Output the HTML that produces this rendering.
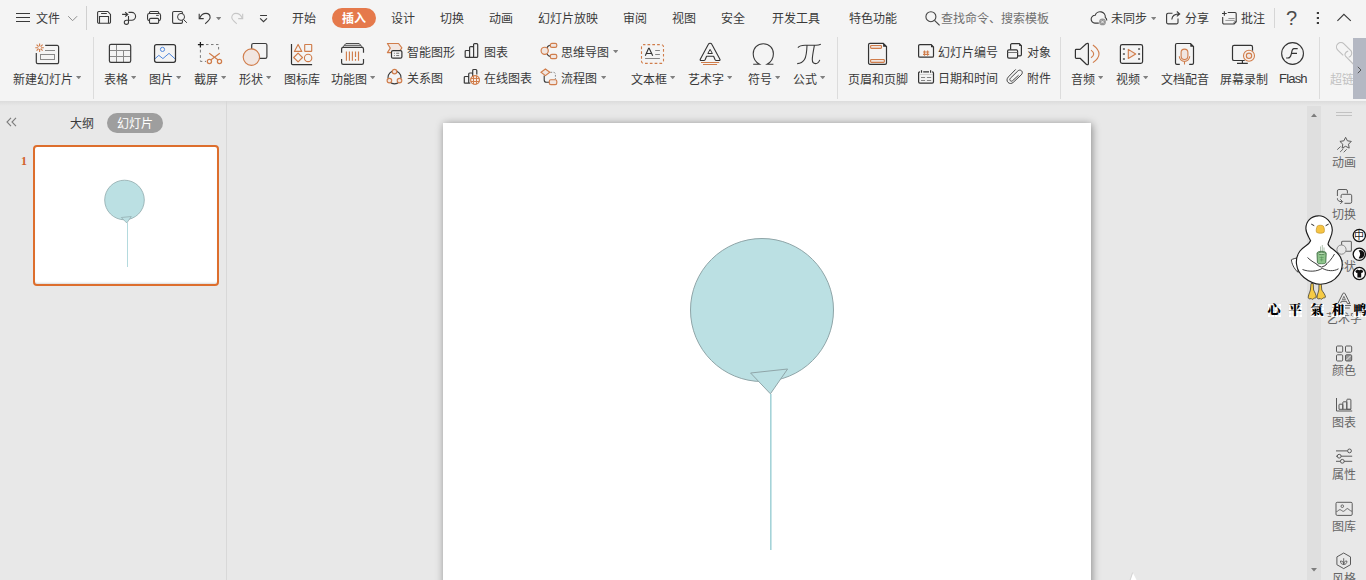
<!DOCTYPE html>
<html lang="zh-CN">
<head>
<meta charset="utf-8">
<title>WPS 演示</title>
<style>
*{margin:0;padding:0;box-sizing:border-box}
html,body{width:1366px;height:580px;overflow:hidden;background:#e8e8e8}
body{position:relative;font-family:"Liberation Sans","Noto Sans CJK SC",sans-serif;font-size:12px;color:#3a3a3a}
.t{position:absolute;white-space:nowrap;line-height:16px;height:16px;font-size:12px}
.i{position:absolute;overflow:visible}
.sep{position:absolute;width:1px;background:#dcdcdc}
.dd{position:absolute;width:5.400px;height:3.200px;background:#808080;clip-path:polygon(0 0,100% 0,50% 100%)}
#ribbon{position:absolute;left:0;top:0;width:1366px;height:101px;background:#f4f4f4}
#ribbonshadow{position:absolute;left:0;top:101px;width:1366px;height:5px;background:linear-gradient(#dcdcdc,#e8e8e8);z-index:3}
#left{position:absolute;left:226px;top:101px;width:1px;height:479px;background:#d8d8d8;z-index:4}
#slide{position:absolute;left:443px;top:123px;width:648px;height:486px;background:#fff;box-shadow:1px 1px 8px 0 rgba(0,0,0,.42)}
#vscroll{position:absolute;left:1307px;top:101px;width:14px;height:479px;background:#dfdfdf}
.g{color:#666}
.cap{position:absolute;top:303px;width:14px;height:14px;line-height:14px;font-size:13px;font-weight:900;color:#000;text-align:center;font-family:"Liberation Serif","Noto Serif CJK SC",serif;background-color:#fff;background-image:linear-gradient(#e4e4e4 1px,transparent 1px),linear-gradient(90deg,#e4e4e4 1px,transparent 1px);background-size:3.500px 3.500px;overflow:hidden}
</style>
</head>
<body>
<div id="ribbon"></div>
<div id="ribbonshadow"></div>
<!--TABS-->
<!-- top row: menu, quick access, tabs -->
<svg class="i" style="left:16px;top:12px" width="15" height="11" viewBox="0 0 15 11"><path d="M0 1.5h14M0 5.5h14M0 9.5h14" stroke="#3a3a3a" stroke-width="1.1" fill="none"/></svg>
<div class="t" style="left:36px;top:11px">文件</div>
<svg class="i" style="left:68px;top:16px" width="10" height="6" viewBox="0 0 10 6"><path d="M0.200 0.200L4.600 4.700L9.100 0.200" stroke="#8e8e8e" stroke-width="1" fill="none"/></svg>
<div class="sep" style="left:86px;top:6px;height:24px;background:#d0d0d0"></div>
<!-- save -->
<svg class="i" style="left:97px;top:11px" width="15" height="14" viewBox="0 0 15 14"><path d="M1.800 0.450h9l2.700 2.950v7.700a1.200 1.200 0 0 1-1.200 1.200h-10.500a1.200 1.200 0 0 1-1.200-1.200v-9.450a1.200 1.200 0 0 1 1.200-1.200z" stroke="#3a3a3a" stroke-width="1.100" fill="none"/><path d="M2.500 12.300v-6.850h9v6.850M4.100 2.450h5.700" stroke="#3a3a3a" stroke-width="1.100" fill="none"/></svg>
<!-- export/convert -->
<svg class="i" style="left:122px;top:11px" width="15" height="15" viewBox="0 0 15 15"><path d="M0.100 3.400h5.500M3.200 1.300l2.600 2.100l-2.600 2.050" stroke="#3a3a3a" stroke-width="1.100" fill="none"/><path d="M6.500 1.400h3.200a3.900 3.900 0 0 1 0 7.800h-5.300a2.100 2.100 0 1 0 2.100 2.100v-6.200" stroke="#3a3a3a" stroke-width="1.100" fill="none"/></svg>
<!-- print -->
<svg class="i" style="left:147px;top:11px" width="15" height="14" viewBox="0 0 15 14"><path d="M2.500 2.450v-1a1 1 0 0 1 1-1h7.150a1 1 0 0 1 1 1v1" stroke="#3a3a3a" stroke-width="1.100" fill="none"/><rect x="0.550" y="2.450" width="13" height="7.150" rx="1.800" stroke="#3a3a3a" stroke-width="1.100" fill="none"/><rect x="2.500" y="7.350" width="9.150" height="5" rx="1.200" fill="#f4f4f4" stroke="#3a3a3a" stroke-width="1.100"/><path d="M9.100 4.400h2.700" stroke="#3a3a3a" stroke-width="0.900"/></svg>
<!-- preview -->
<svg class="i" style="left:172px;top:11px" width="16" height="15" viewBox="0 0 16 15"><rect x="0.600" y="0.450" width="9.850" height="11.900" rx="1.300" stroke="#3a3a3a" stroke-width="1.100" fill="none"/><circle cx="9.050" cy="5.900" r="3.500" stroke="#3a3a3a" stroke-width="1" fill="#f4f4f4"/><path d="M11.600 8.600l3.300 3.200" stroke="#3a3a3a" stroke-width="1" fill="none"/></svg>
<!-- undo -->
<svg class="i" style="left:198px;top:12px" width="14" height="13" viewBox="0 0 14 13"><path d="M1.200 1.800v4.800h4.500" stroke="#3a3a3a" stroke-width="1.100" fill="none"/><path d="M1.600 6.200c1.400-3.200 3.900-4.800 6.400-4.800c2.400 0 4.100 1.800 4.100 4.100c0 2-1.600 3.300-4.900 6.300" stroke="#3a3a3a" stroke-width="1.100" fill="none"/></svg>
<div class="dd" style="left:216px;top:17px"></div>
<!-- redo (disabled) -->
<svg class="i" style="left:230px;top:12px" width="14" height="13" viewBox="0 0 14 13"><path d="M12.700 1.800v4.800h-4.500" stroke="#c6c6c6" stroke-width="1.100" fill="none"/><path d="M12.300 6.200c-1.400-3.200-3.900-4.800-6.400-4.800c-2.400 0-4.100 1.800-4.100 4.100c0 2 1.600 3.300 4.900 6.300" stroke="#c6c6c6" stroke-width="1.100" fill="none"/></svg>
<!-- customize -->
<svg class="i" style="left:259px;top:14px" width="9" height="9" viewBox="0 0 9 9"><path d="M1.100 1.500h6.900M1.100 4.300L4.500 7.700L8 4.300" stroke="#3a3a3a" stroke-width="1.100" fill="none"/></svg>

<div class="t" style="left:292px;top:11px">开始</div>
<div style="position:absolute;left:332px;top:8px;width:44px;height:20px;border-radius:10px;background:#e5794b"></div>
<div class="t" style="left:342px;top:11px;color:#fff;font-weight:bold">插入</div>
<div class="t" style="left:391px;top:11px">设计</div>
<div class="t" style="left:440px;top:11px">切换</div>
<div class="t" style="left:489px;top:11px">动画</div>
<div class="t" style="left:538px;top:11px">幻灯片放映</div>
<div class="t" style="left:623px;top:11px">审阅</div>
<div class="t" style="left:672px;top:11px">视图</div>
<div class="t" style="left:721px;top:11px">安全</div>
<div class="t" style="left:772px;top:11px">开发工具</div>
<div class="t" style="left:849px;top:11px">特色功能</div>
<svg class="i" style="left:925px;top:11px" width="15" height="15" viewBox="0 0 15 15"><circle cx="5.900" cy="5.700" r="5" stroke="#444" stroke-width="1.100" fill="none"/><path d="M9.500 9.400l5.100 5" stroke="#444" stroke-width="1.200"/></svg>
<div class="t" style="left:941px;top:11px;color:#707070">查找命令、搜索模板</div>

<!-- cloud -->
<svg class="i" style="left:1090px;top:10px" width="18" height="16" viewBox="0 -0.600 18 16"><path d="M8.800 12.500H4.900A3.900 3.900 0 0 1 5.200 4.700A5.200 5.200 0 0 1 15.300 6.900C16.400 7.600 16.800 8.600 16.800 9.800" stroke="#3a3a3a" stroke-width="1.100" fill="none"/><circle cx="12.500" cy="11.300" r="3.400" fill="#969696"/><path d="M11.100 9.900l2.800 2.800M13.900 9.900l-2.800 2.800" stroke="#f4f4f4" stroke-width="0.900"/></svg>
<div class="t" style="left:1111px;top:11px">未同步</div>
<div class="dd" style="left:1151px;top:17px"></div>
<!-- share -->
<svg class="i" style="left:1166px;top:11px" width="15" height="14" viewBox="0 0 15 14"><path d="M6.500 2.300h-4.400a1.500 1.500 0 0 0-1.500 1.500v7.600a1.500 1.500 0 0 0 1.500 1.500h8.400a1.500 1.500 0 0 0 1.500-1.500v-3.800" stroke="#3a3a3a" stroke-width="1.100" fill="none"/><path d="M5.800 8.500c0.300-3.400 2.600-5.600 7.800-5.600M10.800 0.500l2.900 2.400l-2.900 2.400" stroke="#3a3a3a" stroke-width="1.100" fill="none"/></svg>
<div class="t" style="left:1185px;top:11px">分享</div>
<!-- comment -->
<svg class="i" style="left:1221px;top:11px" width="16" height="14" viewBox="0 0 16 14"><path d="M6.800 1.500h7.200a1.200 1.200 0 0 1 1.200 1.200v8.200l-2 2.100h-10.300a1.200 1.200 0 0 1-1.200-1.200v-5.700" stroke="#3a3a3a" stroke-width="1.100" fill="none"/><path d="M15.200 10.700h-1.500a0.700 0.700 0 0 0-0.700 0.700v1.600" stroke="#3a3a3a" stroke-width="0.700" fill="none"/><path d="M1 2.500h4.700M3.350 0.200v4.600" stroke="#3a3a3a" stroke-width="1.100"/><path d="M7.400 7.500h6.300M4.400 9.400h9.300" stroke="#8a8a8a" stroke-width="0.900"/></svg>
<div class="t" style="left:1241px;top:11px">批注</div>
<div class="sep" style="left:1274px;top:8px;height:20px;background:#d6d6d6"></div>
<div class="t" style="left:1286px;top:7px;font-size:20px;line-height:22px;height:22px;color:#4c4c4c">?</div>
<svg class="i" style="left:1316px;top:11px" width="4" height="14" viewBox="0 0 4 14"><path d="M0.800 0.900h2.200v2.200h-2.200zM0.800 5.900h2.200v2.200h-2.200zM0.800 10.900h2.200v2.200h-2.200z" fill="#3a3a3a"/></svg>
<svg class="i" style="left:1337px;top:13px" width="15" height="9" viewBox="0 0 15 9"><path d="M0.400 7.900L6.900 1.300L13.800 7.900" stroke="#3a3a3a" stroke-width="1.100" fill="none"/></svg>
<!--/TABS-->
<!--RIBBON-->
<!-- ===== ribbon group 1 ===== -->
<!-- new slide -->
<svg class="i" style="left:34px;top:42px" width="26" height="24" viewBox="0 0 26 24"><path d="M2.300 11v9.300a1.400 1.400 0 0 0 1.400 1.400h19.500a1.400 1.400 0 0 0 1.400-1.400v-15.500a1.400 1.400 0 0 0-1.400-1.400h-12" stroke="#3a3a3a" stroke-width="1.200" fill="none"/><path d="M11 8.500h10" stroke="#8a8a8a" stroke-width="1"/><rect x="6.500" y="12.500" width="14" height="5" stroke="#8a8a8a" stroke-width="1" fill="none"/><path d="M7 5.700h2.900M4.200 5.700h-2.900M5.600 7.100v2.900M5.600 4.300v-2.900M6.600 6.700l2 2M4.600 6.700l-2 2M4.600 4.700l-2-2M6.600 4.700l2-2" stroke="#d07d4b" stroke-width="1.150"/></svg>
<div class="t" style="left:13px;top:72px">新建幻灯片</div>
<div class="dd" style="left:76px;top:76px"></div>
<div class="sep" style="left:93px;top:37px;height:62px"></div>
<!-- table -->
<svg class="i" style="left:108px;top:43px" width="24" height="21" viewBox="0 0 24 21"><path d="M1.400 7.500h21.300M1.400 13.500h21.300M8.500 1.300v18M15.500 7.500v11.800" stroke="#8a8a8a" stroke-width="1"/><rect x="1.400" y="1.300" width="21.300" height="18" rx="1.600" stroke="#3a3a3a" stroke-width="1.200" fill="none"/></svg>
<div class="t" style="left:104px;top:72px">表格</div>
<div class="dd" style="left:131px;top:76px"></div>
<!-- picture -->
<svg class="i" style="left:153px;top:43px" width="24" height="21" viewBox="0 0 24 21"><circle cx="9.500" cy="6.400" r="2.100" stroke="#4f87dd" stroke-width="1" fill="none"/><path d="M2 15.750L5.800 12.350L9.900 15.600L16 10.350L21.950 15.750" stroke="#4f87dd" stroke-width="1" fill="none" stroke-linejoin="round"/><rect x="1.550" y="1.550" width="20.950" height="17.700" rx="2" stroke="#333" stroke-width="1.250" fill="none"/></svg>
<div class="t" style="left:149px;top:72px">图片</div>
<div class="dd" style="left:176px;top:76px"></div>
<!-- screenshot -->
<svg class="i" style="left:197px;top:41px" width="27" height="25" viewBox="0 0 27 25"><path d="M0.900 3.550h5.750M3.400 1v5.600" stroke="#1a1a1a" stroke-width="1.250"/><path d="M9 3.550h12.600v6.900" stroke="#777" stroke-width="1" stroke-dasharray="2.500 2.500" fill="none"/><path d="M3.400 8.700v11.700h5.600" stroke="#777" stroke-width="1" stroke-dasharray="2.800 2.600" fill="none"/><circle cx="12.400" cy="20.400" r="2.100" stroke="#d07d4b" stroke-width="1.250" fill="none"/><circle cx="22.500" cy="20.400" r="2.100" stroke="#d07d4b" stroke-width="1.250" fill="none"/><path d="M12.200 12.200L21.200 18.900M22.800 12.200L13.700 18.900" stroke="#d07d4b" stroke-width="1.200" fill="none"/></svg>
<div class="t" style="left:194px;top:72px">截屏</div>
<div class="dd" style="left:221px;top:76px"></div>
<!-- shapes -->
<svg class="i" style="left:242px;top:42px" width="26" height="25" viewBox="0 0 26 25"><rect x="9.700" y="1.500" width="15.200" height="14.900" rx="1.600" stroke="#3a3a3a" stroke-width="1.200" fill="none"/><circle cx="9.400" cy="15.100" r="8.200" stroke="#d07d4b" stroke-width="1.150" fill="#f1e6e1"/></svg>
<div class="t" style="left:239px;top:72px">形状</div>
<div class="dd" style="left:266px;top:76px"></div>
<!-- icon library -->
<svg class="i" style="left:290px;top:43px" width="24" height="23" viewBox="0 0 24 23"><path d="M1.500 1v19.400a1.200 1.200 0 0 0 1.200 1.200h19.400" stroke="#333" stroke-width="1.200" fill="none"/><path d="M8.100 1.400l3.700 7h-7.400z" stroke="#d07d4b" stroke-width="1.150" fill="none" stroke-linejoin="round"/><rect x="14.700" y="1.500" width="7" height="6.900" rx="0.500" stroke="#d07d4b" stroke-width="1.150" fill="none"/><path d="M8.100 10.100l4.400 4.400l-4.400 4.400l-4.400-4.400z" stroke="#d07d4b" stroke-width="1.150" fill="none" stroke-linejoin="round"/><circle cx="18.100" cy="14.900" r="3.700" stroke="#d07d4b" stroke-width="1.150" fill="none"/></svg>
<div class="t" style="left:284px;top:72px">图标库</div>
<!-- function chart -->
<svg class="i" style="left:340px;top:42px" width="26" height="24" viewBox="0 0 26 24"><path d="M5.900 1.500h13.300M4.300 3.300h16.500M5.900 1.500l-3.300 3.800M19.200 1.500l3.300 3.800" stroke="#3a3a3a" stroke-width="0.900" fill="none"/><path d="M1.600 10.800v-3.900a1.600 1.600 0 0 1 1.600-1.600h18.700a1.600 1.600 0 0 1 1.600 1.600v3.900M1.600 17.100v3.700a1.600 1.600 0 0 0 1.600 1.600h18.700a1.600 1.600 0 0 0 1.600-1.600v-3.700" stroke="#3a3a3a" stroke-width="1.200" fill="none"/><path d="M6.400 9.400v9.400M9.400 9.400v9.400M12.400 9.400v9.400M15.500 9.400v5.700M15.500 17.100v1.700M18.500 9.400v9.400" stroke="#d07d4b" stroke-width="1.150"/></svg>
<div class="t" style="left:331px;top:72px">功能图</div>
<div class="dd" style="left:370px;top:76px"></div>
<!-- smart art -->
<svg class="i" style="left:386px;top:42px" width="17" height="18" viewBox="0 0 17 18"><path d="M1.400 1.500H12.550L15.900 5.900L12.500 10.600H1.400L4.300 6.100Z" stroke="#d07d4b" stroke-width="1.150" fill="#f1e6e1" stroke-linejoin="round"/><rect x="5.500" y="8.600" width="10.400" height="7.600" rx="1.500" stroke="#333" stroke-width="1.200" fill="#f4f4f4"/><path d="M7.900 11.250h0.900M10.200 11.250h3M7.900 13.550h0.900M10.200 13.550h3" stroke="#666" stroke-width="0.900"/></svg>
<div class="t" style="left:407px;top:45px">智能图形</div>
<!-- relation -->
<svg class="i" style="left:386px;top:68px" width="17" height="17" viewBox="0 0 17 17"><circle cx="8.500" cy="9.400" r="6.500" stroke="#3a3a3a" stroke-width="1.100" fill="none"/><circle cx="8.500" cy="3.600" r="2.300" stroke="#d07d4b" stroke-width="1.150" fill="#f1e6e1"/><circle cx="3.400" cy="12.600" r="2.300" stroke="#d07d4b" stroke-width="1.150" fill="#f1e6e1"/><circle cx="13.500" cy="12.600" r="2.300" stroke="#d07d4b" stroke-width="1.150" fill="#f1e6e1"/></svg>
<div class="t" style="left:407px;top:71px">关系图</div>
<!-- chart -->
<svg class="i" style="left:464px;top:42px" width="15" height="17" viewBox="0 0 15 17"><path d="M1.200 15.300v-5.800a1 1 0 0 1 1-1h2.400a1 1 0 0 1 1 1v5.800M5.600 15.300v-9.700a1 1 0 0 1 1-1h2a1 1 0 0 1 1 1v9.700M9.600 15.300v-12.700a1 1 0 0 1 1-1h2.100a1 1 0 0 1 1 1v12a0.700 0.700 0 0 1-0.700 0.700h-11.100a0.700 0.700 0 0 1-0.700-0.700" stroke="#3a3a3a" stroke-width="1.200" fill="none"/></svg>
<div class="t" style="left:484px;top:45px">图表</div>
<!-- online chart -->
<svg class="i" style="left:463px;top:68px" width="18" height="18" viewBox="0 0 18 18"><path d="M1.300 15.200v-5.700a1 1 0 0 1 1-1h2.400a1 1 0 0 1 1 1v5.700M5.700 15.200v-9.200a1 1 0 0 1 1-1h2a1 1 0 0 1 1 1v9.200M9.700 7v-4.500a1 1 0 0 1 1-1h2.100a1 1 0 0 1 1 1v4M1.300 15.200h6" stroke="#3a3a3a" stroke-width="1.200" fill="none"/><circle cx="12.050" cy="12" r="4.400" fill="#f8efe9" stroke="#d07d4b" stroke-width="1.200"/><path d="M10.500 7.800v8.400M13.500 7.800v8.400M7.800 10.450h8.500M7.800 13.500h8.500" stroke="#d07d4b" stroke-width="1"/></svg>
<div class="t" style="left:484px;top:71px">在线图表</div>
<!-- mind map -->
<svg class="i" style="left:540px;top:42px" width="18" height="18" viewBox="0 0 18 18"><path d="M6.800 6.200c1-2.500 1.800-2.900 3.600-2.900M6.800 11.400c1 2.500 1.800 3.100 3.600 3.100" stroke="#3a3a3a" stroke-width="1.100" fill="none"/><circle cx="4.700" cy="8.800" r="3.600" stroke="#d07d4b" stroke-width="1.150" fill="#f1e6e1"/><rect x="10.300" y="1.400" width="6.500" height="4" rx="1.600" stroke="#d07d4b" stroke-width="1.150" fill="#f1e6e1"/><rect x="10.300" y="12.400" width="6.500" height="4.200" rx="1.600" stroke="#d07d4b" stroke-width="1.150" fill="#f1e6e1"/></svg>
<div class="t" style="left:561px;top:45px">思维导图</div>
<div class="dd" style="left:613px;top:50px"></div>
<!-- flow chart -->
<svg class="i" style="left:540px;top:68px" width="18" height="18" viewBox="0 0 18 18"><path d="M4.200 7.400v4.600a2.300 2.300 0 0 0 2.300 2.300h3" stroke="#3a3a3a" stroke-width="1.100" fill="none"/><path d="M10.400 4.300h3a2 2 0 0 1 2 2v5" stroke="#8a8a8a" stroke-width="1" stroke-dasharray="1.800 1.400" fill="none"/><path d="M5.400 1l4.400 3.300l-4.400 3.300l-4.400-3.300z" stroke="#d07d4b" stroke-width="1.150" fill="#f1e6e1"/><rect x="9.300" y="11.700" width="7.500" height="4.900" rx="1.600" stroke="#d07d4b" stroke-width="1.150" fill="#f1e6e1"/></svg>
<div class="t" style="left:561px;top:71px">流程图</div>
<div class="dd" style="left:601px;top:76px"></div>
<!--R2-->
<!-- text box -->
<svg class="i" style="left:640px;top:43px" width="26" height="22" viewBox="0 0 26 22"><rect x="1.500" y="1.600" width="22" height="18.800" rx="2.200" stroke="#d07d4b" stroke-width="1.100" stroke-dasharray="2.700 2.100" stroke-dashoffset="1" fill="none"/><path d="M5.300 12.800l3.300-7.500h0.600l3.500 7.500M6.400 10.500h5.200" stroke="#333" stroke-width="1.100" fill="none"/><path d="M15.200 7.500h4.700M15.200 11.500h4.700M5.100 15.500h14.800" stroke="#858585" stroke-width="1"/></svg>
<div class="t" style="left:631px;top:72px">文本框</div>
<div class="dd" style="left:670px;top:76px"></div>
<!-- word art -->
<svg class="i" style="left:699px;top:42px" width="23" height="24" viewBox="0 0 23 24"><path d="M9.400 2.300C10.100 0.800 12.100 0.800 12.800 2.300L20.900 17.200Q21.500 18.500 20 18.500H17.300Q16.500 18.500 16.100 17.700L14.600 14.200H7.600L6.100 17.700Q5.700 18.500 4.900 18.500H2.200Q0.700 18.500 1.300 17.200Z" stroke="#333" stroke-width="1.100" fill="none" stroke-linejoin="round"/><path d="M11.100 7.400L13.400 11.500H8.800Z" stroke="#333" stroke-width="1" fill="none" stroke-linejoin="round"/><path d="M2 20.500h18.200M4 22.500h14.100" stroke="#d07d4b" stroke-width="1.150"/></svg>
<div class="t" style="left:688px;top:72px">艺术字</div>
<div class="dd" style="left:727px;top:76px"></div>
<!-- omega -->
<svg class="i" style="left:752px;top:42px" width="23" height="24" viewBox="0 0 23 24"><path d="M1.200 22.300h6.300c-3.700-2.200-6.300-5.800-6.300-10.600c0-5.800 4.200-10 10.100-10c5.900 0 10.100 4.200 10.100 10c0 4.800-2.600 8.400-6.300 10.600h6.300" stroke="#3a3a3a" stroke-width="1.100" fill="none"/></svg>
<div class="t" style="left:748px;top:72px">符号</div>
<div class="dd" style="left:775px;top:76px"></div>
<!-- pi -->
<svg class="i" style="left:796px;top:43px" width="26" height="22" viewBox="0 0 26 22"><path d="M1.900 4.700C3.500 2.600 5.500 2.300 9 2.300H20C22 2.300 23.600 1.800 24.800 1.200M11 2.400C10.800 8 10.600 13 8.500 16.500C6.800 19.300 4.200 20.500 1.200 20.600M18.400 2.300C17.400 8 16.300 13 16.300 16.500C16.300 19.300 17.800 20.600 19.600 20.600C21.600 20.600 23 19 23.800 16.900" stroke="#3a3a3a" stroke-width="1.100" fill="none"/></svg>
<div class="t" style="left:793px;top:72px">公式</div>
<div class="dd" style="left:820px;top:76px"></div>
<div class="sep" style="left:837px;top:37px;height:62px"></div>
<!-- header footer -->
<svg class="i" style="left:867px;top:42px" width="21" height="24" viewBox="0 0 21 24"><path d="M16.300 1.450h-13.350a1.400 1.400 0 0 0-1.400 1.400v18.050a1.400 1.400 0 0 0 1.400 1.400h15.150a1.400 1.400 0 0 0 1.400-1.400v-16.400z" stroke="#333" stroke-width="1.200" fill="none"/><path d="M16.100 1.250l3.600 3.450h-3.600z" fill="#333"/><rect x="3.600" y="3.500" width="10.900" height="2.900" rx="0.800" stroke="#d07d4b" stroke-width="1.150" fill="#f1e6e1"/><rect x="3.600" y="17.500" width="13.750" height="2.850" rx="0.800" stroke="#d07d4b" stroke-width="1.150" fill="#f1e6e1"/></svg>
<div class="t" style="left:848px;top:72px">页眉和页脚</div>
<!-- slide number -->
<svg class="i" style="left:917px;top:43px" width="18" height="16" viewBox="0 0 18 16"><path d="M14.200 1.600h-11.300a1.300 1.300 0 0 0-1.300 1.300v10a1.300 1.300 0 0 0 1.300 1.300h12.300a1.300 1.300 0 0 0 1.300-1.300v-8.900z" stroke="#333" stroke-width="1.200" fill="none"/><path d="M14 1.400l2.700 2.800h-2.700z" fill="#333"/><path d="M7.500 7.400v5.300M10.600 7.400v5.300M6 9h6.200M6 11.400h6.200" stroke="#d07d4b" stroke-width="1.100"/></svg>
<div class="t" style="left:938px;top:45px">幻灯片编号</div>
<!-- date time -->
<svg class="i" style="left:917px;top:68px" width="18" height="17" viewBox="0 0 18 17"><path d="M3 3.900h-0.100a1.300 1.300 0 0 0-1.300 1.300v8.600a1.300 1.300 0 0 0 1.300 1.300h12.300a1.300 1.300 0 0 0 1.300-1.300v-8.600a1.300 1.300 0 0 0-1.300-1.300h-0.100M6.200 3.800h5.800" stroke="#333" stroke-width="1.200" fill="none"/><path d="M4.500 2.200v2.600M13.600 2.200v2.600" stroke="#333" stroke-width="1.200"/><path d="M2 6.500h14" stroke="#c8c8c8" stroke-width="0.800"/><path d="M4 9.500h4.100M9.900 9.500h4.300M4 12.500h4.100M9.900 12.500h4.300" stroke="#858585" stroke-width="1"/></svg>
<div class="t" style="left:938px;top:71px">日期和时间</div>
<!-- object -->
<svg class="i" style="left:1006px;top:42px" width="17" height="18" viewBox="0 0 17 18"><path d="M4.600 7.600v-4.600a1.300 1.300 0 0 1 1.300-1.300h7.400l2.100 2.100v8.800a1.300 1.300 0 0 1-1.300 1.300h-2.300" stroke="#333" stroke-width="1.200" fill="none"/><path d="M13.200 1.500l2.400 2.400h-2.400z" fill="#333"/><rect x="1.600" y="7.900" width="10" height="8.200" rx="1.300" stroke="#333" stroke-width="1.200" fill="none"/><path d="M1.600 10.500h10" stroke="#666" stroke-width="0.900"/></svg>
<div class="t" style="left:1027px;top:45px">对象</div>
<!-- attachment -->
<svg class="i" style="left:1006px;top:68px" width="17" height="17" viewBox="0 0 17 17"><path d="M9.700 1.400L2.400 8.900C0.600 10.800 0.600 13 2 14.400C3.400 15.800 5.600 15.900 7.200 14.400L15.200 6.900C16.600 5.500 16.600 3.800 15.500 2.800C14.400 1.800 12.900 1.900 11.800 3L4.400 10.200C3.600 11 3.600 12 4.300 12.700C5 13.400 6 13.300 6.700 12.600L12.600 7.200" stroke="#444" stroke-width="1" fill="none"/></svg>
<div class="t" style="left:1027px;top:71px">附件</div>
<div class="sep" style="left:1060px;top:37px;height:62px"></div>
<!-- audio -->
<svg class="i" style="left:1074px;top:42px" width="27" height="24" viewBox="0 0 27 24"><path d="M2.200 7.400H6.100L12.300 1.800Q14.400 0.600 14.400 2.600V21.500Q14.400 23.500 12.300 22.300L6.100 16.300H2.200Q1.400 16.300 1.400 15.500V8.200Q1.400 7.400 2.200 7.400Z" stroke="#333" stroke-width="1.200" fill="none" stroke-linejoin="round"/><path d="M17 8.100Q22.400 12 17 15.800M18.900 3Q31.100 12 18.900 20.600" stroke="#d07d4b" stroke-width="1.100" fill="none"/></svg>
<div class="t" style="left:1071px;top:72px">音频</div>
<div class="dd" style="left:1098px;top:76px"></div>
<!-- video -->
<svg class="i" style="left:1119px;top:43px" width="25" height="22" viewBox="0 0 25 22"><rect x="1.400" y="1.600" width="22.200" height="18.800" rx="1.800" stroke="#333" stroke-width="1.200" fill="none"/><path d="M3.900 5h2v2h-2zM3.900 10h2v2h-2zM3.900 15h2v2h-2zM19.100 5h2v2h-2zM19.100 10h2v2h-2zM19.100 15h2v2h-2z" fill="#7a7a7a"/><path d="M9.300 6.400v9.100l7.400-4.500z" stroke="#d07d4b" stroke-width="1.100" fill="#f1e6e1" stroke-linejoin="round"/></svg>
<div class="t" style="left:1116px;top:72px">视频</div>
<div class="dd" style="left:1143px;top:76px"></div>
<!-- doc voice -->
<svg class="i" style="left:1174px;top:42px" width="21" height="24" viewBox="0 0 21 24"><path d="M5.800 22.400h-2.900a1.400 1.400 0 0 1-1.400-1.400v-18.100a1.400 1.400 0 0 1 1.400-1.400h13.700l2.900 2.900v16.600a1.400 1.400 0 0 1-1.400 1.400h-2.900" stroke="#333" stroke-width="1.200" fill="none"/><path d="M16.300 1.300l3.400 3.400h-3.400z" fill="#333"/><rect x="7.100" y="7.100" width="6.800" height="10.400" rx="3.400" stroke="#d07d4b" stroke-width="1.100" fill="#f1e6e1"/><path d="M5.300 14.200a5.200 5.200 0 0 0 10.400 0M10.500 19.700v2.900" stroke="#d07d4b" stroke-width="1.100" fill="none"/></svg>
<div class="t" style="left:1161px;top:72px">文档配音</div>
<!-- screen record -->
<svg class="i" style="left:1231px;top:43px" width="26" height="22" viewBox="0 0 26 22"><rect x="1.500" y="2.400" width="20" height="15.100" rx="1.600" stroke="#333" stroke-width="1.200" fill="none"/><path d="M11.400 17.500v2.900M6 20.400h10.800" stroke="#333" stroke-width="1.200"/><circle cx="18" cy="12.800" r="6.300" fill="#f4f4f4"/><circle cx="18" cy="12.800" r="5.500" stroke="#d07d4b" stroke-width="1.100" fill="#f6f1ee"/><circle cx="18" cy="12.800" r="2.700" stroke="#d07d4b" stroke-width="1.100" fill="#f1e6e1"/></svg>
<div class="t" style="left:1220px;top:72px">屏幕录制</div>
<!-- flash -->
<svg class="i" style="left:1280px;top:41px" width="25" height="25" viewBox="0 0 25 25"><circle cx="12.550" cy="12.500" r="10.900" stroke="#333" stroke-width="1.100" fill="none"/><path d="M17.700 7.600H14C11.800 7.600 11.900 10.500 11.300 13C10.700 15.600 10.200 17 8 17H6.100M11.600 12.400H17" stroke="#333" stroke-width="1.100" fill="none"/></svg>
<div class="t" style="left:1279px;top:71px;font-size:13px;letter-spacing:-0.800px">Flash</div>
<div class="sep" style="left:1319px;top:37px;height:62px"></div>
<!-- hyperlink (disabled, clipped) -->
<svg class="i" style="left:1335px;top:41px" width="19" height="24" viewBox="-0.700 -0.700 19 24"><path d="M7.500 13.700L2.100 8.400A4.350 4.350 0 0 1 8.300 2.200L15.600 9.500A4.350 4.350 0 0 1 13 15.600M12.500 9.400C9.500 10.500 8.300 12.800 10 14.800L18 22.800" stroke="#bebebe" stroke-width="1.100" fill="none"/></svg>
<div class="t" style="left:1330px;top:72px;color:#c2c2c2">超链</div>
<div style="position:absolute;left:1353px;top:38px;width:13px;height:61px;background:#b4b8c3"></div>
<svg class="i" style="left:1357px;top:66px" width="5" height="8" viewBox="0 0 5 8"><path d="M0.800 0.800L4 4L0.800 7.200" stroke="#4a4a4a" stroke-width="0.900" fill="none"/></svg>

<!--/RIBBON-->
<div id="left"></div>
<!--LEFT-->
<!-- left panel content -->
<svg class="i" style="left:6px;top:117px" width="11" height="10" viewBox="0 0 11 10"><path d="M5 0.800L1 5L5 9.200M10 0.800L6 5L10 9.200" stroke="#7c7c7c" stroke-width="1.100" fill="none"/></svg>
<div class="t" style="left:70px;top:116px">大纲</div>
<div style="position:absolute;left:107px;top:113px;width:56px;height:20px;border-radius:10px;background:#9e9e9e"></div>
<div class="t" style="left:117px;top:116px;color:#fff">幻灯片</div>
<div class="t" style="left:21px;top:153px;font-family:'Liberation Serif',serif;font-weight:bold;font-size:12px;color:#d2622a">1</div>
<div style="position:absolute;left:33px;top:145px;width:186px;height:141px;border:2px solid #dd6e2d;border-radius:4px;background:#fff;box-shadow:inset 0 -2px 2px -1px rgba(0,0,0,.15)"></div>
<svg class="i" style="left:35px;top:147px" width="182" height="137" viewBox="0 0 182 137"><circle cx="89.500" cy="53" r="19.800" fill="#bbe0e3" stroke="#8fa9ac" stroke-width="0.800"/><path d="M86.300 70.500l10-1l-4.500 6.500z" fill="#bbe0e3" stroke="#8fa9ac" stroke-width="0.700"/><path d="M92.500 76v44" stroke="#b4dade" stroke-width="1"/></svg>
<!--/LEFT-->
<div id="slide"></div>
<!--SLIDE-->
<svg class="i" style="left:443px;top:123px" width="648" height="457" viewBox="0 0 648 457"><circle cx="319" cy="187" r="71.500" fill="#bbe0e3" stroke="#8fa5a8" stroke-width="1"/><path d="M307.600 250l37-4l-17.200 24.800z" fill="#bbe0e3" stroke="#8fa5a8" stroke-width="1" stroke-linejoin="miter"/><path d="M327.800 271v156" stroke="#a5d3d8" stroke-width="1.600"/></svg>
<svg class="i" style="left:1129px;top:571px" width="9" height="9" viewBox="0 0 9 9"><path d="M3.700 1.500L1.200 9H7.500z" fill="#fff"/><path d="M3.700 1.500L1.200 9" stroke="#c8c8c8" stroke-width="0.800"/></svg>
<!--/SLIDE-->
<div id="vscroll"></div>
<!--RIGHT-->
<!-- right task pane strip -->
<svg class="i" style="left:1311px;top:113px" width="6" height="4" viewBox="0 0 6 4"><path d="M3 0.500L6 4H0z" fill="#7d7d7d"/></svg>
<svg class="i" style="left:1311px;top:568px" width="6" height="4" viewBox="0 0 6 4"><path d="M3 3.500L6 0H0z" fill="#7d7d7d"/></svg>
<div style="position:absolute;left:1336px;top:112px;width:16px;height:1px;background:#c2c2c2"></div>
<div style="position:absolute;left:1336px;top:115px;width:16px;height:1px;background:#c2c2c2"></div>
<!-- animation -->
<svg class="i" style="left:1335px;top:136px" width="18" height="18" viewBox="0 0 18 18"><path d="M10.600 1.300l1.800 3.500l3.900 0.600l-2.800 2.800l0.700 3.900l-3.600-1.800l-3.500 1.800l0.700-3.900l-2.900-2.800l4-0.600z" stroke="#5a5a5a" stroke-width="1" fill="none" stroke-linejoin="round"/><path d="M5.600 10.500l-3.400 3.200M8.400 12.800l-3.300 3.200M11.700 13.300l-3 3" stroke="#5a5a5a" stroke-width="0.900"/></svg>
<div class="t g" style="left:1332px;top:155px">动画</div>
<!-- transition -->
<svg class="i" style="left:1335px;top:188px" width="18" height="17" viewBox="0 0 18 17"><path d="M2.400 8v-5a1.500 1.500 0 0 1 1.500-1.500h7a1.500 1.500 0 0 1 1.500 1.500v2.500" stroke="#5a5a5a" stroke-width="1" fill="none"/><path d="M9.500 15.300h5.700a1.500 1.500 0 0 0 1.500-1.500v-6a1.500 1.500 0 0 0-1.500-1.500h-7.600a1.500 1.500 0 0 0-1.500 1.500v2.200" stroke="#5a5a5a" stroke-width="1" fill="none"/><path d="M2.400 10.300c0 2.400 1.300 3.300 4.800 3.300M5.300 11.300l2.300 2.300l-2.300 2.300" stroke="#5a5a5a" stroke-width="1" fill="none"/></svg>
<div class="t g" style="left:1332px;top:207px">切换</div>
<!-- shapes -->
<svg class="i" style="left:1335px;top:240px" width="18" height="16" viewBox="0 0 18 16"><rect x="6.600" y="1.300" width="9.800" height="9.900" rx="1" stroke="#666" stroke-width="1.100" fill="none"/><circle cx="6.500" cy="9.600" r="4.600" stroke="#8a8a8a" stroke-width="1" fill="#e8e8e8"/></svg>
<div class="t g" style="left:1332px;top:259px">形状</div>
<!-- word art -->
<svg class="i" style="left:1335px;top:292px" width="18" height="18" viewBox="0 0 18 18"><path d="M7.700 1.800a1.300 1.300 0 0 1 2.400 0l4.900 9.800h-2.600l-1-2.300h-5l-1 2.300h-2.600z" stroke="#5a5a5a" stroke-width="1" fill="none" stroke-linejoin="round"/><path d="M8.900 4.300l-1.500 3.400h3z" stroke="#5a5a5a" stroke-width="0.800" fill="none"/><path d="M1.800 13.500h14.200M3 16h11.800" stroke="#5a5a5a" stroke-width="0.900"/></svg>
<div class="t g" style="left:1326px;top:311px">艺术字</div>
<!-- color -->
<svg class="i" style="left:1335px;top:344px" width="18" height="18" viewBox="0 0 18 18"><rect x="1.500" y="2" width="6.200" height="6.200" rx="1" stroke="#5a5a5a" stroke-width="1" fill="none"/><rect x="10.500" y="2" width="6.200" height="6.200" rx="1" stroke="#5a5a5a" stroke-width="1" fill="none"/><rect x="1.500" y="10.800" width="6.200" height="6.200" rx="1" stroke="#5a5a5a" stroke-width="1" fill="none"/><rect x="10.500" y="10.800" width="6.200" height="6.200" rx="1" stroke="#5a5a5a" stroke-width="1" fill="#9a9a9a"/><path d="M11.500 16l4.200-4.200" stroke="#e8e8e8" stroke-width="1"/></svg>
<div class="t g" style="left:1332px;top:363px">颜色</div>
<!-- chart -->
<svg class="i" style="left:1335px;top:397px" width="18" height="16" viewBox="0 0 18 16"><path d="M1.500 1v13h15.700" stroke="#5a5a5a" stroke-width="1" fill="none"/><path d="M4 12.300v-4.300a0.800 0.800 0 0 1 0.800-0.800h2.200a0.800 0.800 0 0 1 0.800 0.800v4.300M7.800 12.300v-6.700a0.800 0.800 0 0 1 0.800-0.800h2.400a0.800 0.800 0 0 1 0.800 0.800v6.700M11.800 12.300v-9.300a0.800 0.800 0 0 1 0.800-0.800h2.500a0.800 0.800 0 0 1 0.800 0.800v9.300zM4 12.300h12" stroke="#5a5a5a" stroke-width="1" fill="none"/></svg>
<div class="t g" style="left:1332px;top:415px">图表</div>
<!-- properties -->
<svg class="i" style="left:1335px;top:447px" width="18" height="17" viewBox="0 0 18 17"><path d="M1 3.900h11.400M1 9.200h1.500M6 9.200h11.200M1 14.300h4.400M9 14.300h8.200" stroke="#5a5a5a" stroke-width="1"/><circle cx="14.500" cy="3.900" r="1.900" stroke="#5a5a5a" stroke-width="1" fill="none"/><circle cx="4.200" cy="9.200" r="1.900" stroke="#5a5a5a" stroke-width="1" fill="none"/><circle cx="7.300" cy="14.300" r="1.900" stroke="#5a5a5a" stroke-width="1" fill="none"/></svg>
<div class="t g" style="left:1332px;top:467px">属性</div>
<!-- gallery -->
<svg class="i" style="left:1335px;top:501px" width="18" height="15" viewBox="0 0 18 15"><rect x="1" y="1.300" width="16.200" height="13.100" rx="1.200" stroke="#5a5a5a" stroke-width="1" fill="none"/><circle cx="7.300" cy="5.200" r="1.300" stroke="#5a5a5a" stroke-width="0.900" fill="none"/><path d="M1.400 10.600c1.600-0.200 2.200-1.900 3.500-1.900c1.400 0 2 1.600 3.600 1.600c1.500 0 2.600-2.800 3.700-2.800c1 0 2.500 2.300 4.800 2.800" stroke="#5a5a5a" stroke-width="0.900" fill="none"/></svg>
<div class="t g" style="left:1332px;top:519px">图库</div>
<!-- style -->
<svg class="i" style="left:1335px;top:552px" width="18" height="18" viewBox="0 0 18 18"><path d="M8.700 1l6.800 3.900v7.800l-6.800 3.900l-6.800-3.900v-7.800z" stroke="#5a5a5a" stroke-width="1" fill="none" stroke-linejoin="round"/><path d="M8.700 12.600v-6.400M8.700 12.400c-2.400 0-3.200-1.300-3.200-3.400c2 0 3.200 1 3.200 3.400c0-2.400 1.200-3.400 3.200-3.400c0 2.100-0.800 3.400-3.200 3.400" stroke="#5a5a5a" stroke-width="0.900" fill="none"/></svg>
<div class="t g" style="left:1332px;top:571px">风格</div>
<!--/RIGHT-->
<!--DUCK-->
<!-- desktop pet overlay: duck -->
<svg class="i" style="left:1286px;top:208px" width="80" height="94" viewBox="0 0 80 94">
<!-- legs + feet -->
<path d="M25 75.500L27.200 75.500L27.600 82C28.600 84 30.500 87 30.200 89.500C29.200 90.500 28.300 89.700 27.600 90.600C26.800 91.800 25.600 91.400 25 90.400C24.200 91.200 22.600 91 22.300 89.800C22 87.500 23.600 85 24.400 82Z" fill="#f6cb45" stroke="#2a2a2a" stroke-width="0.700" stroke-linejoin="round"/>
<path d="M33 75.500L35.200 75.500L35.800 82C36.800 84 39.800 87 39.400 89.300C38.400 90.300 37.400 89.500 36.600 90.400C35.800 91.600 34.600 91.400 34 90.400C33.200 91.200 31.400 91 31.100 89.800C30.800 87.500 32.200 85 32.800 82Z" fill="#f6cb45" stroke="#2a2a2a" stroke-width="0.700" stroke-linejoin="round"/>
<!-- tail -->
<path d="M12 49.500c-2.500 1-5.200 1.300-6.600 2.300c0.300 3.500 2.200 8.500 6.600 12.500z" fill="#fff" stroke="#2a2a2a" stroke-width="0.900" stroke-linejoin="round"/>
<!-- body + head -->
<path d="M32.500 7.800c-7.500 0-12.800 5.700-12.600 13c0.100 5 3.300 8.500 4.700 12c-1.500 4.300-7 5.300-10.600 10.200c-2.800 3.800-4 8.700-3.500 13c0.600 5.200 3.200 10 7.500 13.500c4.600 3.700 10 6.800 16.500 6.700c7.500-0.100 14-3.500 18-9c3-4.200 4.400-9.500 3.300-14.500c-1-4.600-4-7.800-7.500-10.500c-2.300-1.800-5.500-3.500-6.300-6.200c1-4.500 4.500-8.500 4.300-14c-0.300-8-6.500-14.200-13.800-14.200z" fill="#fff" stroke="#1e1e1e" stroke-width="1.150"/>
<!-- wings -->
<path d="M21.500 49.500c3 3 7.500 6 12.800 8.300M48.500 46c-2.500 4.500-6 9-10.500 12M16.500 61.500c6.500 2.500 14.500 2.300 19.800-1.200c5 2.800 11.500 3.300 16.200 0.500" stroke="#2a2a2a" stroke-width="0.900" fill="none"/>
<!-- cup -->
<path d="M34.500 38.500v4.500M36.300 37v6M38 39.500v3.500" stroke="#7a9a7a" stroke-width="0.600"/>
<path d="M31 45.300c0-1.200 2-2 4.600-2c2.600 0 4.600 0.800 4.600 2l-0.400 9c0 1.100-1.800 1.800-4.200 1.800c-2.400 0-4.200-0.700-4.200-1.800z" fill="#8ec48b" stroke="#2f5f34" stroke-width="0.800"/>
<ellipse cx="35.600" cy="45.400" rx="3.600" ry="1.200" fill="#b7dcb3" stroke="#2f5f34" stroke-width="0.600"/>
<path d="M33.500 49.500h4.200M33.800 51.800h3.600M35.600 48.500v5" stroke="#4f8a52" stroke-width="0.500"/>
<!-- hands over cup -->
<path d="M30.500 56.500c1.500 1.200 3 2 5 2.600c2-0.600 3.800-1.500 5.300-2.900" stroke="#2a2a2a" stroke-width="0.900" fill="#fff"/>
<!-- face -->
<path d="M25.600 16.300l2.300 1.200M42.300 16.300l-2.300 1.200" stroke="#2a2a2a" stroke-width="1" stroke-linecap="round"/>
<path d="M31.300 18c0.800-1 5.200-1 6 0c1 1.800 1.500 4.300 0.800 6.300c-1.500 1.300-5.800 1.300-7.600 0c-0.700-2 0-4.500 0.800-6.300z" fill="#f6c443" stroke="#b98a1e" stroke-width="0.600"/>
</svg>
<!-- pet side buttons -->
<svg class="i" style="left:1351px;top:228px" width="15" height="54" viewBox="0 0 15 54">
<circle cx="8.300" cy="7.400" r="6.100" fill="#fff" stroke="#111" stroke-width="1.300"/>
<circle cx="8.300" cy="26.300" r="6.100" fill="#fff" stroke="#111" stroke-width="1.300"/>
<circle cx="8.300" cy="45.500" r="6.100" fill="#fff" stroke="#111" stroke-width="1.300"/>
<path d="M7.600 22.400a4.200 4.200 0 1 1 0 7.800a5.800 5.800 0 0 0 0-7.800z" fill="#111"/>
<path d="M4.200 42.900l2.400-1.400c0.800 1 2.600 1 3.400 0l2.400 1.400l-1.200 2.200l-1-0.400v4.800h-3.800v-4.800l-1 0.400z" fill="#111"/>
</svg>
<div class="t" style="left:1354px;top:228px;font-size:10px;line-height:15px;height:15px;color:#1a1a1a">中</div>
<!-- pet caption -->
<div class="cap" style="left:1267px">心</div><div class="cap" style="left:1288px">平</div><div class="cap" style="left:1310px">氣</div><div class="cap" style="left:1331px">和</div><div class="cap" style="left:1353px">鸭</div>
<!--/DUCK-->
</body>
</html>
